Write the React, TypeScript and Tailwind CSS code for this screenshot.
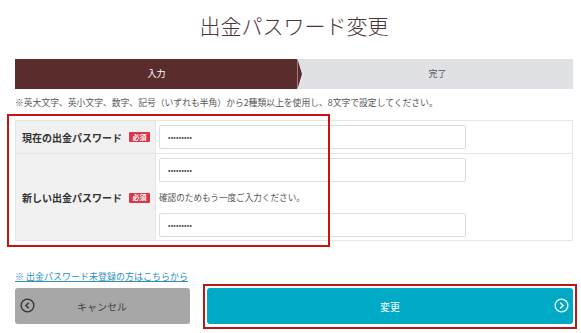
import React from "react";

const font = { fontFamily: '"Noto Sans CJK JP", "Noto Sans", sans-serif' };

function Badge() {
  return (
    <span className="inline-flex items-center justify-center w-[21px] h-[10px] bg-[#d9364a] text-white text-[7px] font-bold rounded-[1px] leading-none">
      必須
    </span>
  );
}

function PwInput() {
  return (
    <div className="h-[24px] w-[307px] border border-[#dcdcdc] rounded-[2px] bg-white flex items-center pl-[8px] text-[7px] text-[#444] tracking-[0.3px]">
      •••••••••
    </div>
  );
}

export default function App() {
  return (
    <div className="relative w-[581px] h-[333px] bg-white overflow-hidden" style={font}>
      <div className="pl-[15px] pr-[8px]">
        <h1 className="pt-[11px] h-[59px] text-center text-[21px] leading-[28px] font-light text-[#4a3434] tracking-[0px]">
          出金パスワード変更
        </h1>

        {/* stepper */}
        <div className="flex h-[30px] text-[9px]">
          <div className="relative w-[283px] bg-[#5a2c2c] flex items-center justify-center text-white">
            入力
            <svg className="absolute right-[-5px] top-0" width="6" height="30" viewBox="0 0 6 30">
              <polygon points="0,0 1,0 5.5,15 1,30 0,30" fill="#5a2c2c" stroke="#ffffff" strokeWidth="0.8" />
            </svg>
          </div>
          <div className="flex-1 bg-[#dfe1e4] flex items-center justify-center text-[#555] pl-[4px]">
            完了
          </div>
        </div>

        <p className="mt-[7px] text-[8.8px] leading-[14px] text-[#555] whitespace-nowrap">
          ※英大文字、英小文字、数字、記号（いずれも半角）から2種類以上を使用し、8文字で設定してください。
        </p>

        {/* table */}
        <div className="mt-[10px] border border-[#e6e6e6] text-[#333]">
          <div className="flex h-[33px] border-b border-[#e6e6e6]">
            <div className="w-[140px] bg-[#f1f1f1] border-r border-[#e6e6e6] flex items-center pl-[6px] pr-[5px] justify-between">
              <span className="text-[10px] font-bold">現在の出金パスワード</span>
              <Badge />
            </div>
            <div className="flex-1 flex items-center pl-[3px]">
              <PwInput />
            </div>
          </div>
          <div className="flex h-[86px]">
            <div className="w-[140px] bg-[#f1f1f1] border-r border-[#e6e6e6] flex items-center pl-[6px] pr-[5px] justify-between pt-[1px]">
              <span className="text-[10px] font-bold">新しい出金パスワード</span>
              <Badge />
            </div>
            <div className="flex-1 flex flex-col pl-[3px] pt-[4px]">
              <PwInput />
              <div className="h-[31px] flex items-center text-[8.6px] text-[#555]">
                確認のためもう一度ご入力ください。
              </div>
              <PwInput />
            </div>
          </div>
        </div>

        <div className="mt-[26px] h-[12px] leading-[12px]">
          <a className="text-[9px] text-[#2f8fc0] underline" href="#">
            ※ 出金パスワード未登録の方はこちらから
          </a>
        </div>

        {/* buttons */}
        <div className="mt-[9px] flex gap-[17px]">
          <button className="relative w-[175px] h-[36px] bg-[#a7a7a7] rounded-[3px] flex items-center justify-center text-[10px] text-[#444]">
            <svg className="absolute left-[5px] top-[10px]" width="15" height="15" viewBox="0 0 16 16">
              <circle cx="8" cy="8" r="6.8" fill="none" stroke="#333" strokeWidth="1.4" />
              <polyline points="9.3,5 6.3,8 9.3,11" fill="none" stroke="#333" strokeWidth="1.5" />
            </svg>
            <span className="pr-[1px]">キャンセル</span>
          </button>
          <button className="relative flex-1 h-[36px] bg-[#00a9c6] rounded-[3px] flex items-center justify-center text-[10px] text-white">
            <svg className="absolute right-[4px] top-[10px]" width="15" height="15" viewBox="0 0 16 16">
              <circle cx="8" cy="8" r="6.8" fill="none" stroke="#fff" strokeWidth="1.4" />
              <polyline points="6.7,5 9.7,8 6.7,11" fill="none" stroke="#fff" strokeWidth="1.5" />
            </svg>
            変更
          </button>
        </div>
      </div>

      {/* red annotation boxes */}
      <div className="absolute left-[7px] top-[114px] w-[323px] h-[133px] border-2 border-[#cc1111] pointer-events-none" />
      <div className="absolute left-[203px] top-[284px] w-[374px] h-[45px] border-2 border-[#b81818] pointer-events-none" />
    </div>
  );
}
